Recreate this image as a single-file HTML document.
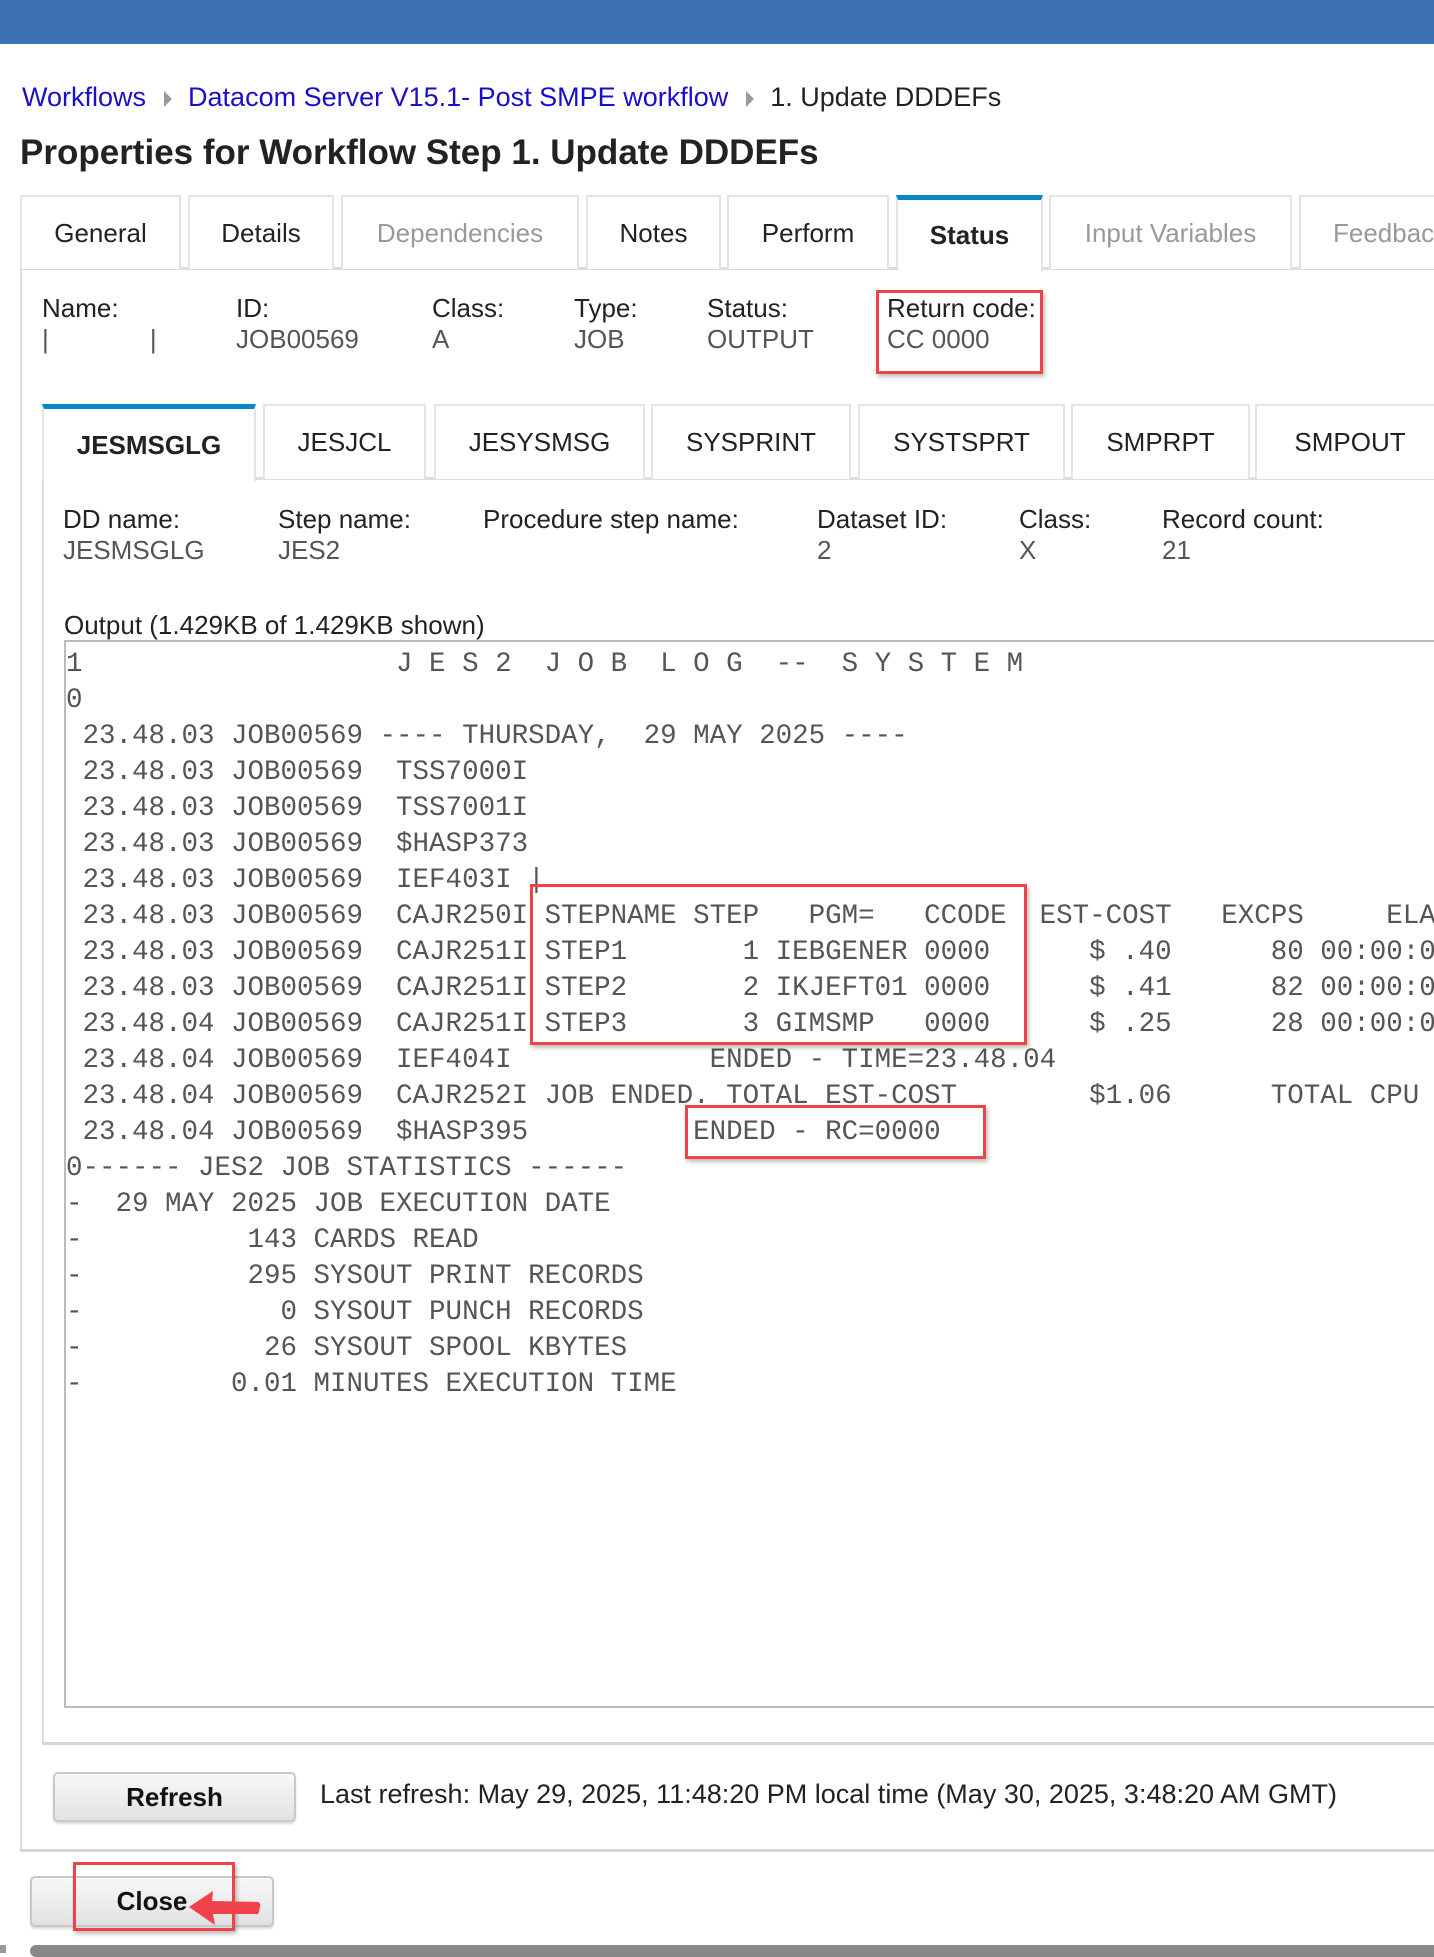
<!DOCTYPE html>
<html><head><meta charset="utf-8"><style>
*{margin:0;padding:0;box-sizing:border-box}
body{width:1434px;height:1953px;position:relative;overflow:hidden;background:#fff;font-family:"Liberation Sans",Arial,sans-serif;color:#222}
.a{position:absolute;white-space:nowrap}
.top{left:0;top:0;width:1434px;height:44px;background:#3d71b1}
.bc{top:80px;font-size:27px;line-height:34px}
.bc a{color:#1a0dcc;text-decoration:none}
.tri{display:inline-block;width:0;height:0;border-left:8px solid #999;border-top:8px solid transparent;border-bottom:8px solid transparent;margin:0 16px 0 18px;vertical-align:middle}
h1{position:absolute;left:20px;top:133px;font-size:35px;font-weight:bold;color:#222;white-space:nowrap}
.tab{position:absolute;top:195px;height:74px;border:2px solid #e4e4e4;border-bottom:none;font-size:26px;display:flex;align-items:center;justify-content:center;color:#222;background:#fff}
.tab.dis{color:#999}
.tab.sel{border-top:5px solid #0a86c6;font-weight:bold;height:76px;border-color:#e4e4e4;border-top-color:#0a86c6}
.tab2{position:absolute;top:404px;height:75px;border:2px solid #e4e4e4;border-bottom:none;font-size:26px;display:flex;align-items:center;justify-content:center;color:#222;background:#fff}
.tab2.sel{border-top:5px solid #0a86c6;font-weight:bold;height:77px}
.lbl{font-size:26px;color:#222;line-height:31px}
.val{font-size:26px;color:#555;line-height:31px}
.red{position:absolute;border:3px solid #f0424a;box-shadow:2px 3px 4px rgba(0,0,0,.25)}
pre{position:absolute;left:66px;top:647px;font-family:"Liberation Mono",monospace;font-size:27.5px;line-height:36px;color:#555}
.btn{position:absolute;border:2px solid #c8c8c8;border-radius:5px;background:linear-gradient(#f8f8f8,#e2e2e2);font-weight:bold;font-size:26px;display:flex;align-items:center;justify-content:center;color:#111;box-shadow:0 2px 2px rgba(0,0,0,.15)}
</style></head><body>
<div class="a top"></div>
<div class="a bc" style="left:22px"><a>Workflows</a><span class="tri"></span><a>Datacom Server V15.1- Post SMPE workflow</a><span class="tri"></span>1. Update DDDEFs</div>
<h1>Properties for Workflow Step 1. Update DDDEFs</h1>

<div class="a" style="left:20px;top:267px;width:1420px;height:3px;background:#ddd"></div>
<div class="tab" style="left:20px;width:161px">General</div>
<div class="tab" style="left:188px;width:146px">Details</div>
<div class="tab dis" style="left:341px;width:238px">Dependencies</div>
<div class="tab" style="left:586px;width:135px">Notes</div>
<div class="tab" style="left:727px;width:162px">Perform</div>
<div class="tab sel" style="left:896px;width:147px">Status</div>
<div class="tab dis" style="left:1049px;width:243px">Input Variables</div>
<div class="tab dis" style="left:1299px;width:160px;justify-content:flex-start;padding-left:32px">Feedback</div>

<div class="a" style="left:20px;top:269px;width:2px;height:1582px;background:#ddd"></div>
<div class="a" style="left:20px;top:1849px;width:1420px;height:3px;background:#d6d6d6"></div>

<div class="a lbl" style="left:42px;top:293px">Name:</div>
<div class="a val" style="left:42px;top:324px">|&nbsp;&nbsp;&nbsp;&nbsp;&nbsp;&nbsp;&nbsp;&nbsp;&nbsp;&nbsp;&nbsp;&nbsp;&nbsp;&nbsp;|</div>
<div class="a lbl" style="left:236px;top:293px">ID:</div>
<div class="a val" style="left:236px;top:324px">JOB00569</div>
<div class="a lbl" style="left:432px;top:293px">Class:</div>
<div class="a val" style="left:432px;top:324px">A</div>
<div class="a lbl" style="left:574px;top:293px">Type:</div>
<div class="a val" style="left:574px;top:324px">JOB</div>
<div class="a lbl" style="left:707px;top:293px">Status:</div>
<div class="a val" style="left:707px;top:324px">OUTPUT</div>
<div class="a lbl" style="left:887px;top:293px">Return code:</div>
<div class="a val" style="left:887px;top:324px">CC 0000</div>
<div class="red" style="left:876px;top:290px;width:167px;height:84px"></div>

<div class="a" style="left:42px;top:477px;width:1400px;height:3px;background:#ddd"></div>
<div class="tab2 sel" style="left:42px;width:214px">JESMSGLG</div>
<div class="tab2" style="left:263px;width:163px">JESJCL</div>
<div class="tab2" style="left:434px;width:211px">JESYSMSG</div>
<div class="tab2" style="left:651px;width:200px">SYSPRINT</div>
<div class="tab2" style="left:858px;width:207px">SYSTSPRT</div>
<div class="tab2" style="left:1071px;width:179px">SMPRPT</div>
<div class="tab2" style="left:1255px;width:190px">SMPOUT</div>

<div class="a" style="left:42px;top:479px;width:2px;height:1266px;background:#ddd"></div>
<div class="a" style="left:42px;top:1742px;width:1400px;height:3px;background:#d6d6d6"></div>

<div class="a lbl" style="left:63px;top:504px">DD name:</div>
<div class="a val" style="left:63px;top:535px">JESMSGLG</div>
<div class="a lbl" style="left:278px;top:504px">Step name:</div>
<div class="a val" style="left:278px;top:535px">JES2</div>
<div class="a lbl" style="left:483px;top:504px">Procedure step name:</div>
<div class="a lbl" style="left:817px;top:504px">Dataset ID:</div>
<div class="a val" style="left:817px;top:535px">2</div>
<div class="a lbl" style="left:1019px;top:504px">Class:</div>
<div class="a val" style="left:1019px;top:535px">X</div>
<div class="a lbl" style="left:1162px;top:504px">Record count:</div>
<div class="a val" style="left:1162px;top:535px">21</div>

<div class="a lbl" style="left:64px;top:610px">Output (1.429KB of 1.429KB shown)</div>
<div class="a" style="left:64px;top:640px;width:1380px;height:1068px;border:2px solid #bbb;border-right:none"></div>
<pre>1                   J E S 2  J O B  L O G  --  S Y S T E M
0
 23.48.03 JOB00569 ---- THURSDAY,  29 MAY 2025 ----
 23.48.03 JOB00569  TSS7000I
 23.48.03 JOB00569  TSS7001I
 23.48.03 JOB00569  $HASP373
 23.48.03 JOB00569  IEF403I |
 23.48.03 JOB00569  CAJR250I STEPNAME STEP   PGM=   CCODE  EST-COST   EXCPS     ELAPSED
 23.48.03 JOB00569  CAJR251I STEP1       1 IEBGENER 0000      $ .40      80 00:00:00
 23.48.03 JOB00569  CAJR251I STEP2       2 IKJEFT01 0000      $ .41      82 00:00:00
 23.48.04 JOB00569  CAJR251I STEP3       3 GIMSMP   0000      $ .25      28 00:00:00
 23.48.04 JOB00569  IEF404I            ENDED - TIME=23.48.04
 23.48.04 JOB00569  CAJR252I JOB ENDED. TOTAL EST-COST        $1.06      TOTAL CPU
 23.48.04 JOB00569  $HASP395          ENDED - RC=0000
0------ JES2 JOB STATISTICS ------
-  29 MAY 2025 JOB EXECUTION DATE
-          143 CARDS READ
-          295 SYSOUT PRINT RECORDS
-            0 SYSOUT PUNCH RECORDS
-           26 SYSOUT SPOOL KBYTES
-         0.01 MINUTES EXECUTION TIME</pre>
<div class="red" style="left:530px;top:884px;width:497px;height:161px"></div>
<div class="red" style="left:685px;top:1105px;width:301px;height:54px"></div>

<div class="btn" style="left:53px;top:1772px;width:243px;height:50px">Refresh</div>
<div class="a" style="left:320px;top:1779px;font-size:27px;color:#222">Last refresh: May 29, 2025, 11:48:20 PM local time (May 30, 2025, 3:48:20 AM GMT)</div>

<div class="btn" style="left:30px;top:1876px;width:244px;height:51px">Close</div>
<div class="red" style="left:73px;top:1862px;width:162px;height:69px"></div>
<svg class="a" style="left:185px;top:1885px" width="80" height="45" viewBox="0 0 80 45"><path d="M4 22 L28 6 L27 16 L73 17 Q76 18 75 22 L74 27 Q73 30 70 29 L28 29 L30 40 Z" fill="#f0424a"/></svg>

<div class="a" style="left:30px;top:1945px;width:1410px;height:12px;background:#888;border-radius:6px"></div>
<div class="a" style="left:0;top:1945px;width:6px;height:8px;background:#999"></div>
</body></html>
